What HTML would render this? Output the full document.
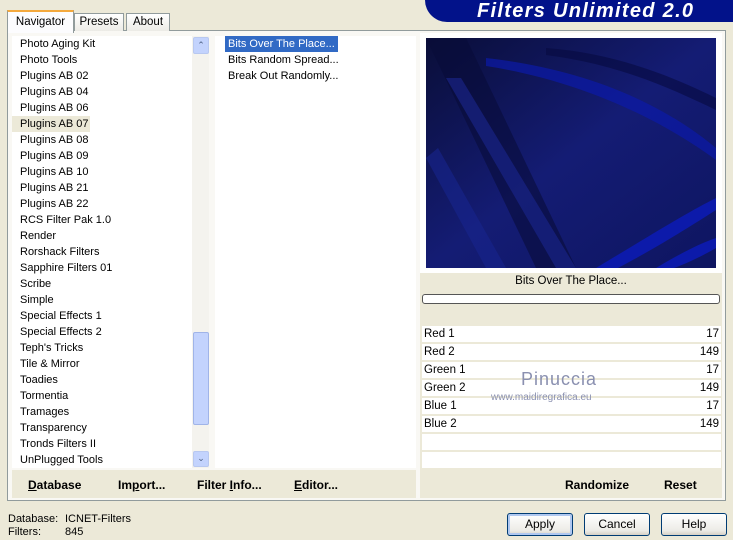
<!DOCTYPE html><html><head><style>
body{margin:0;width:733px;height:540px;background:#ECE9D8;font-family:"Liberation Sans",sans-serif;font-size:11px;position:relative;overflow:hidden;color:#000}
.a{position:absolute}
.list div{height:16px;line-height:16px;padding-left:8px;white-space:nowrap}
.b{font-weight:bold;font-size:12px}
.btn{position:absolute;top:513px;width:64px;height:21px;border:1px solid #003C74;border-radius:3px;background:linear-gradient(#fff,#ECEBE6 80%,#D6D0C5);text-align:center;line-height:21px;font-size:12px}
.row{position:absolute;left:422px;width:299px;height:16px;background:#fff;line-height:16px;font-size:11.5px}
.row span{position:absolute;right:2px}
.row b{font-weight:normal;padding-left:2px}
</style></head><body>
<div class="a" style="left:425px;top:0;width:320px;height:22px;background:#02128A;border-bottom-left-radius:22px"></div>
<div class="a" style="left:477px;top:0px;color:#fff;font:italic bold 20px 'Liberation Sans',sans-serif;letter-spacing:1.3px">Filters Unlimited 2.0</div>
<div class="a" style="left:7px;top:30px;width:717px;height:469px;border:1px solid #919B9C;background:#F9F8F4"></div>
<div class="a" style="left:7px;top:10px;width:65px;height:21px;border:1px solid #919B9C;border-bottom:none;border-top:2px solid #F4A93D;background:#FCFCFE;text-align:center;line-height:20px;font-size:11.5px">Navigator</div>
<div class="a" style="left:74px;top:13px;width:48px;height:17px;border:1px solid #919B9C;border-bottom:none;background:linear-gradient(#fff,#ECEBE6);text-align:center;line-height:17px;font-size:11.5px">Presets</div>
<div class="a" style="left:126px;top:13px;width:42px;height:17px;border:1px solid #919B9C;border-bottom:none;background:linear-gradient(#fff,#ECEBE6);text-align:center;line-height:17px;font-size:11.5px">About</div>
<div class="a list" style="left:12px;top:36px;width:180px;height:432px;background:#fff;font-size:11px">
<div>Photo Aging Kit</div><div>Photo Tools</div><div>Plugins AB 02</div><div>Plugins AB 04</div><div>Plugins AB 06</div><div style="background:#ECE9D8;width:70px">Plugins AB 07</div><div>Plugins AB 08</div><div>Plugins AB 09</div><div>Plugins AB 10</div><div>Plugins AB 21</div><div>Plugins AB 22</div><div>RCS Filter Pak 1.0</div><div>Render</div><div>Rorshack Filters</div><div>Sapphire Filters 01</div><div>Scribe</div><div>Simple</div><div>Special Effects 1</div><div>Special Effects 2</div><div>Teph's Tricks</div><div>Tile &amp; Mirror</div><div>Toadies</div><div>Tormentia</div><div>Tramages</div><div>Transparency</div><div>Tronds Filters II</div><div>UnPlugged Tools</div>
</div>
<div class="a" style="left:192px;top:36px;width:17px;height:432px;background:#F4F3EE"></div>
<div class="a" style="left:193px;top:37px;width:14px;height:15px;border:1px solid #B8C8F0;border-radius:2px;background:#C3D3FD;color:#4D6185;font-size:9px;text-align:center;line-height:15px">&#8963;</div>
<div class="a" style="left:193px;top:332px;width:14px;height:91px;border:1px solid #A0B4E8;border-radius:2px;background:#C3D3FD"></div>
<div class="a" style="left:193px;top:451px;width:14px;height:14px;border:1px solid #B8C8F0;border-radius:2px;background:#C3D3FD;color:#4D6185;font-size:9px;text-align:center;line-height:12px">&#8964;</div>
<div class="a list" style="left:215px;top:36px;width:201px;height:432px;background:#fff;font-size:11px">
<div style="padding:0"><span style="background:#316AC5;color:#fff;padding:0 3px;margin-left:10px;display:inline-block">Bits Over The Place...</span></div><div style="padding-left:13px">Bits Random Spread...</div><div style="padding-left:13px">Break Out Randomly...</div>
</div>
<div class="a" style="left:12px;top:470px;width:404px;height:28px;background:#ECE9D8"></div>
<div class="a b" style="left:28px;top:478px"><u>D</u>atabase</div>
<div class="a b" style="left:118px;top:478px">Im<u>p</u>ort...</div>
<div class="a b" style="left:197px;top:478px">Filter <u>I</u>nfo...</div>
<div class="a b" style="left:294px;top:478px"><u>E</u>ditor...</div>
<div class="a" style="left:420px;top:33px;width:302px;height:240px;background:#fff"></div>
<svg class="a" style="left:426px;top:38px" width="290" height="230">
<defs><linearGradient id="g" x1="0" y1="0" x2="1" y2="1"><stop offset="0" stop-color="#0A0E38"/><stop offset="0.5" stop-color="#141C74"/><stop offset="1" stop-color="#0E1560"/></linearGradient></defs>
<rect width="290" height="230" fill="url(#g)"/>
<path d="M0 0 L40 0 L150 230 L110 230Z" fill="#080C38" opacity=".6"/>
<path d="M20 40 L35 40 L150 230 L130 230Z" fill="#1A2690" opacity=".6"/>
<path d="M0 120 L12 110 L80 230 L60 230Z" fill="#18248E" opacity=".6"/>
<path d="M60 20 C150 30 230 60 290 110 L290 122 C230 78 150 42 60 28Z" fill="#0C1AA8" opacity=".7"/>
<path d="M120 10 C190 15 250 40 290 60 L290 72 C240 48 190 26 120 17Z" fill="#060A40" opacity=".6"/>
<path d="M170 230 C220 200 260 175 290 160 L290 172 C265 188 230 210 192 230Z" fill="#0C1AAA"/>
<path d="M230 230 C255 215 275 205 290 200 L290 210 C278 217 262 225 248 230Z" fill="#0C1AAA"/>
</svg>
<div class="a" style="left:420px;top:273px;width:302px;height:50px;background:#ECE9D8"></div>
<div class="a" style="left:420px;top:275px;width:302px;text-align:center;font-size:11.5px">Bits Over The Place...</div>
<div class="a" style="left:422px;top:294px;width:296px;height:8px;border:1px solid #555;border-radius:3px;background:#fff"></div>
<div class="a" style="left:420px;top:323px;width:302px;height:148px;background:#ECE9D8"></div>
<div class="row" style="top:326px"><b>Red 1</b><span>17</span></div>
<div class="row" style="top:344px"><b>Red 2</b><span>149</span></div>
<div class="row" style="top:362px"><b>Green 1</b><span>17</span></div>
<div class="row" style="top:380px"><b>Green 2</b><span>149</span></div>
<div class="row" style="top:398px"><b>Blue 1</b><span>17</span></div>
<div class="row" style="top:416px"><b>Blue 2</b><span>149</span></div>
<div class="row" style="top:434px"></div>
<div class="row" style="top:452px"></div>
<div class="a" style="left:521px;top:369px;color:#8A90B0;font-size:18px;letter-spacing:1px">Pinuccia</div>
<div class="a" style="left:491px;top:392px;color:#8A90B0;font-size:10px">www.maidiregrafica.eu</div>
<div class="a" style="left:420px;top:471px;width:302px;height:27px;background:#ECE9D8"></div>
<div class="a b" style="left:565px;top:478px">Randomize</div>
<div class="a b" style="left:664px;top:478px">Reset</div>
<div class="a" style="left:8px;top:513px;line-height:13px;font-size:11px">Database:<br>Filters:</div>
<div class="a" style="left:65px;top:513px;line-height:13px;font-size:11px">ICNET-Filters<br>845</div>
<div class="btn" style="left:507px;box-shadow:inset 0 0 0 2px #B0C8F0">Apply</div>
<div class="btn" style="left:584px">Cancel</div>
<div class="btn" style="left:661px">Help</div>
</body></html>
